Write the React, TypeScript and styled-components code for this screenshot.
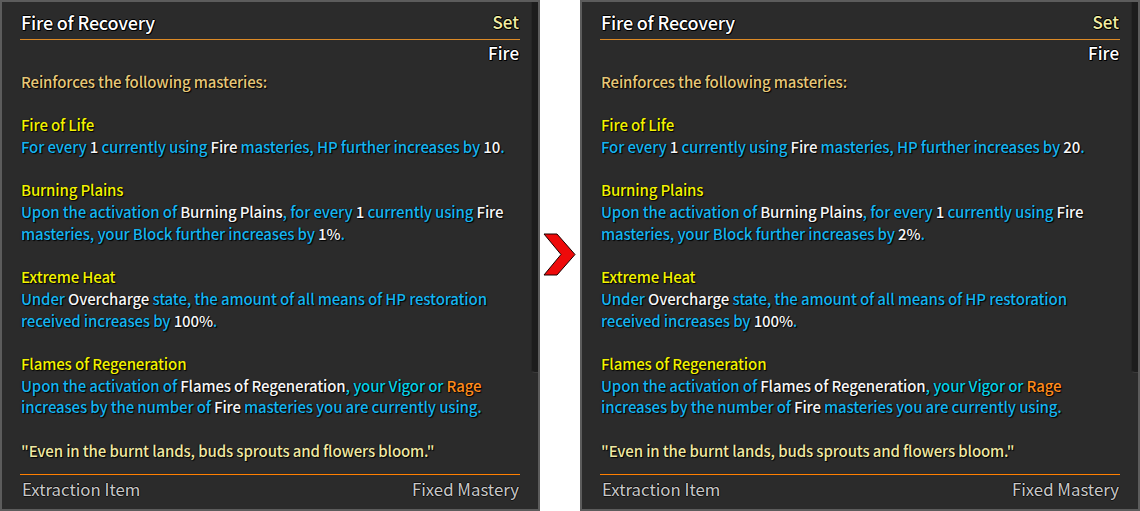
import React from "react";
import styled, { createGlobalStyle } from "styled-components";

const GlobalStyle = createGlobalStyle`
  html, body { margin: 0; padding: 0; background: #ffffff; }
  body { font-family: "Noto Sans CJK JP", "Noto Sans", sans-serif; }
`;

const Page = styled.div`
  display: flex;
  align-items: stretch;
  width: 1140px;
  height: 511px;
  overflow: hidden;
`;

const Panel = styled.div<{ $w: number }>`
  position: relative;
  box-sizing: border-box;
  flex: 0 0 ${(p) => p.$w}px;
  width: ${(p) => p.$w}px;
  height: 511px;
  border: 2px solid #5c5c5c;
  background: #2b2b2b;
  padding: 0 18px;
  display: flex;
  flex-direction: column;
`;

const Scroll = styled.div`
  position: absolute;
  top: 0;
  right: 0;
  width: 6px;
  height: 370px;
  background: #1d1d1d;
  border-bottom: 1px solid #3a3a3a;
  border-left: 1px solid #262626;
  border-bottom-left-radius: 4px;
`;

const outline = `
  text-shadow: 1px 0 0 #000, -1px 0 0 #000, 0 1px 0 #000, 0 -1px 0 #000,
    1px 1px 0 #000;
`;

const HeaderRow = styled.div`
  display: flex;
  justify-content: space-between;
  align-items: flex-end;
  padding: 9px 1px 6px 1px;
  border-bottom: 1px solid #dd8a26;
  line-height: 22px;
`;

const Title = styled.span`
  font-size: 18px;
  font-weight: 500;
  letter-spacing: -0.2px;
  color: #ffffff;
  ${outline}
`;

const SetTag = styled.span`
  font-size: 17px;
  font-weight: 500;
  color: #f1eca2;
  ${outline}
`;

const Element = styled.div`
  margin-top: 3px;
  text-align: right;
  padding-right: 1px;
  font-size: 17px;
  font-weight: 500;
  line-height: 20px;
  color: #ffffff;
  ${outline}
`;

const Body = styled.div`
  margin-top: 8px;
  padding-left: 1px;
  font-size: 15px;
  font-weight: 500;
  letter-spacing: -0.13px;
  line-height: 21.7px;
  text-shadow: 1px 1px 1px #000, -1px 0 1px rgba(0, 0, 0, 0.6);
`;

const Line = styled.div`
  white-space: nowrap;
  height: 21.7px;
`;

const toneColors: Record<string, string> = {
  label: "#e5c677",
  head: "#f2f200",
  blue: "#16b4ef",
  white: "#f6f6f6",
  cyan: "#06d0e6",
  orange: "#ff8a1a",
  quote: "#efe8a2",
};

const Seg = styled.span<{ $tone: string }>`
  color: ${(p) => toneColors[p.$tone]};
`;

const Footer = styled.div`
  margin-top: auto;
  border-top: 1px solid #ff7f00;
  padding: 3px 1px 9px 2px;
  display: flex;
  justify-content: space-between;
  font-size: 16.8px;
  font-weight: 400;
  line-height: 22px;
  color: #c8c8c8;
  text-shadow: 1px 0 0 #111, -1px 0 0 #111, 0 1px 0 #111, 0 -1px 0 #111;
`;

const ArrowSlot = styled.div`
  flex: 0 0 40px;
  display: flex;
  align-items: center;
  justify-content: center;
`;

type S = [string, string];

const lines = (life: string, block: string): S[][] => [
  [["label", "Reinforces the following masteries:"]],
  [],
  [["head", "Fire of Life"]],
  [
    ["blue", "For every "],
    ["white", "1"],
    ["blue", " currently using "],
    ["white", "Fire"],
    ["blue", " masteries, HP further increases by "],
    ["white", life],
    ["blue", "."],
  ],
  [],
  [["head", "Burning Plains"]],
  [
    ["blue", "Upon the activation of "],
    ["white", "Burning Plains"],
    ["blue", ", for every "],
    ["white", "1"],
    ["blue", " currently using "],
    ["white", "Fire"],
  ],
  [
    ["blue", "masteries, your Block further increases by "],
    ["white", block],
    ["blue", "."],
  ],
  [],
  [["head", "Extreme Heat"]],
  [
    ["blue", "Under "],
    ["white", "Overcharge"],
    ["blue", " state, the amount of all means of HP restoration"],
  ],
  [
    ["blue", "received increases by "],
    ["white", "100%"],
    ["blue", "."],
  ],
  [],
  [["head", "Flames of Regeneration"]],
  [
    ["blue", "Upon the activation of "],
    ["white", "Flames of Regeneration"],
    ["cyan", ", your Vigor or "],
    ["orange", "Rage"],
  ],
  [
    ["blue", "increases by the number of "],
    ["white", "Fire"],
    ["blue", " masteries you are currently using."],
  ],
  [],
  [["quote", "\"Even in the burnt lands, buds sprouts and flowers bloom.\""]],
];

function Tooltip({ width, life, block }: { width: number; life: string; block: string }) {
  return (
    <Panel $w={width}>
      <Scroll />
      <HeaderRow>
        <Title>Fire of Recovery</Title>
        <SetTag>Set</SetTag>
      </HeaderRow>
      <Element>Fire</Element>
      <Body>
        {lines(life, block).map((segs, i) => (
          <Line key={i}>
            {segs.map(([tone, text], j) => (
              <Seg key={j} $tone={tone}>
                {text}
              </Seg>
            ))}
          </Line>
        ))}
      </Body>
      <Footer>
        <span>Extraction Item</span>
        <span>Fixed Mastery</span>
      </Footer>
    </Panel>
  );
}

export default function App() {
  return (
    <>
      <GlobalStyle />
      <Page>
        <Tooltip width={540} life="10" block="1%" />
        <ArrowSlot>
          <svg width="40" height="511" viewBox="540 0 40 511">
            <polygon
              points="544,234 557,234 575,254.5 557,275 544,275 561,254.5"
              fill="#ee0a0a"
              stroke="#1a0000"
              strokeWidth="1"
              strokeLinejoin="miter"
            />
          </svg>
        </ArrowSlot>
        <Tooltip width={560} life="20" block="2%" />
      </Page>
    </>
  );
}
